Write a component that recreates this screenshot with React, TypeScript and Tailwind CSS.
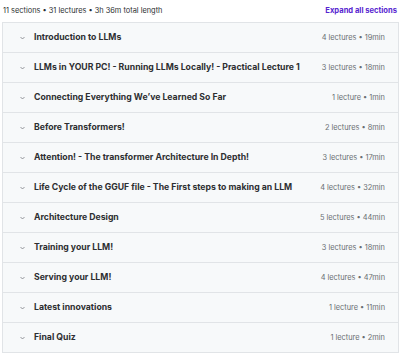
import React from 'react';

const sections = [
  { title: 'Introduction to LLMs', meta: '4 lectures • 19min' },
  { title: 'LLMs in YOUR PC! - Running LLMs Locally! - Practical Lecture 1', meta: '3 lectures • 18min' },
  { title: 'Connecting Everything We’ve Learned So Far', meta: '1 lecture • 1min' },
  { title: 'Before Transformers!', meta: '2 lectures • 8min' },
  { title: 'Attention! - The transformer Architecture In Depth!', meta: '3 lectures • 17min' },
  { title: 'Life Cycle of the GGUF file - The First steps to making an LLM', meta: '4 lectures • 32min' },
  { title: 'Architecture Design', meta: '5 lectures • 44min' },
  { title: 'Training your LLM!', meta: '3 lectures • 18min' },
  { title: 'Serving your LLM!', meta: '4 lectures • 47min' },
  { title: 'Latest innovations', meta: '1 lecture • 11min' },
  { title: 'Final Quiz', meta: '1 lecture • 2min' },
];

const Chevron = () => (
  <svg width="5" height="4" viewBox="0 0 5 4" fill="none" className="shrink-0">
    <path d="M0.5 1 L2.5 3 L4.5 1" stroke="#6a6f73" strokeWidth="0.7" />
  </svg>
);

const App = () => {
  return (
    <div className="w-[400px] h-[354px] bg-white font-['Inter',sans-serif] overflow-hidden">
      <div className="h-[22px] flex items-center justify-between pl-[3px] pr-[3px]">
        <span className="text-[7.4px] text-[#2d2f31]">
          11 sections • 31 lectures • 3h 36m total length
        </span>
        <span className="text-[7.6px] font-bold text-[#5624d0]">Expand all sections</span>
      </div>
      <div className="ml-[2px] w-[397px] border border-[#e1e4e7]">
        {sections.map((s, i) => (
          <div
            key={s.title}
            className={`flex items-center bg-[#f7f9fa] pl-[17px] pr-[13px] ${
              i === 0 ? 'h-[29px]' : 'h-[30px] border-t border-[#e1e4e7]'
            }`}
          >
            <Chevron />
            <span className="ml-[9px] text-[8.7px] font-bold text-[#2d2f31] whitespace-nowrap">
              {s.title}
            </span>
            <span className="ml-auto text-[7.4px] text-[#6a6f73] whitespace-nowrap">{s.meta}</span>
          </div>
        ))}
      </div>
    </div>
  );
};

export default App;
